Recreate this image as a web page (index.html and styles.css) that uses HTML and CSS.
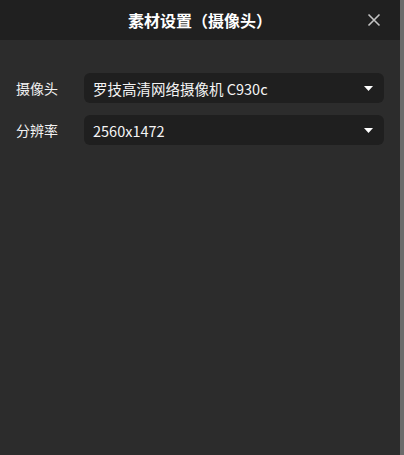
FILE: index.html
```html
<!DOCTYPE html>
<html lang="zh">
<head>
<meta charset="utf-8">
<link rel="stylesheet" href="styles.css">
</head>
<body>
<div class="window">
  <div class="panel">
    <header class="header">
      <h1 class="title">素材设置（摄像头）</h1>
      <button class="close" aria-label="关闭">
        <svg width="14" height="14" viewBox="0 0 14 14"><path d="M1.5 1.5 L12.5 12.5 M12.5 1.5 L1.5 12.5" stroke="#c4c4c4" stroke-width="1.6" fill="none"/></svg>
      </button>
    </header>
    <div class="form">
      <div class="row">
        <span class="label">摄像头</span>
        <div class="select">
          <span class="value">罗技高清网络摄像机 C930c</span>
          <svg class="caret" width="9" height="5" viewBox="0 0 9 5"><path d="M0 0 H9 L4.5 5 Z" fill="#fff"/></svg>
        </div>
      </div>
      <div class="row">
        <span class="label">分辨率</span>
        <div class="select">
          <span class="value">2560x1472</span>
          <svg class="caret" width="9" height="5" viewBox="0 0 9 5"><path d="M0 0 H9 L4.5 5 Z" fill="#fff"/></svg>
        </div>
      </div>
    </div>
  </div>
  <div class="scrollbar"></div>
</div>
</body>
</html>
```
FILE: styles.css
```css
* { box-sizing: border-box; }
html, body { margin: 0; padding: 0; height: 100%; }
body {
  background: #2c2c2c;
  font-family: "Noto Sans CJK SC", "Noto Sans", sans-serif;
  color: #f2f2f2;
}
.window {
  display: flex;
  height: 455px;
}
.panel {
  flex: 1;
  background: #2c2c2c;
}
.scrollbar {
  width: 4px;
  background: #6b6b6b;
}
.header {
  height: 40px;
  background: #202020;
  display: flex;
  align-items: center;
  justify-content: center;
  position: relative;
}
.title {
  margin: 0;
  font-size: 16px;
  font-weight: 700;
  color: #ffffff;
  line-height: 20px;
  letter-spacing: 0;
}
.close {
  position: absolute;
  right: 19px;
  top: 13px;
  width: 14px;
  height: 14px;
  padding: 0;
  border: 0;
  background: none;
  display: flex;
}
.form {
  padding: 33px 16px 0 16px;
  display: flex;
  flex-direction: column;
  gap: 12px;
}
.row {
  display: flex;
  align-items: center;
}
.label {
  width: 68px;
  font-size: 14px;
  color: #f2f2f2;
}
.select {
  flex: 1;
  height: 30px;
  background: #1f1f1f;
  border-radius: 6px;
  display: flex;
  align-items: center;
  padding: 0 11px 0 9px;
}
.value {
  flex: 1;
  font-size: 14.5px;
  color: #f4f4f4;
}
.caret { display: block; }
```
